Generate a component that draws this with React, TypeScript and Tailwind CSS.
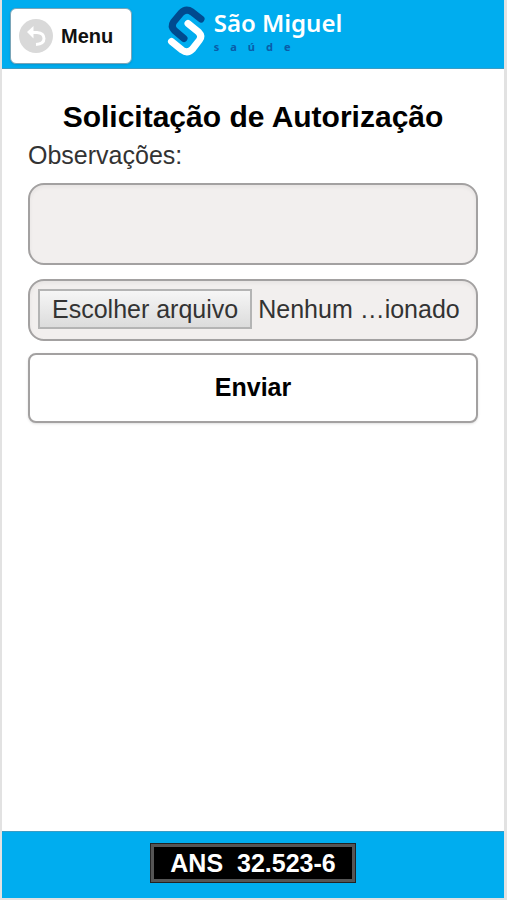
import React, { useState } from 'react';

const Logo: React.FC = () => (
  <div className="flex items-start gap-2 pl-1">
    <svg viewBox="0 0 38 48" className="w-[38px] h-12 overflow-visible" fill="none" strokeWidth="7" strokeLinecap="round" strokeLinejoin="round" aria-hidden="true">
      <path d="M33 13 L24 6 Q18 2 13 7 L5.5 16 Q2.5 20.5 6.5 24.5 L16 32.5" stroke="#004a8f" />
      <path d="M20 17.5 L30.5 26 Q34.5 30 31.5 34 L24.5 43 Q19.5 48 14 44 L3.5 35.5" stroke="#fff" />
    </svg>
    <div className="flex flex-col font-['Noto_Sans',sans-serif]">
      <span className="text-2xl leading-[34px] font-semibold text-white">São Miguel</span>
      <span className="text-[11px] leading-3.5 font-bold tracking-[11px] text-[#0a5ca8]">saúde</span>
    </div>
  </div>
);

const App: React.FC = () => {
  const [notes, setNotes] = useState('');
  const [fileName, setFileName] = useState('Nenhum …ionado');

  const handleFile = (e: React.ChangeEvent<HTMLInputElement>) => {
    const file = e.target.files?.[0];
    setFileName(file ? file.name : 'Nenhum …ionado');
  };

  return (
    <div className="min-h-screen flex flex-col bg-white border-l-2 border-r-3 border-b-2 border-[#e2e2e2] font-['Liberation_Sans',Arial,sans-serif] text-black">
      {/* Top bar */}
      <header className="grid grid-cols-[1fr_auto_1fr] items-start bg-[#00adef] border-b border-[#3a9cc4] px-2 pt-1.5 pb-1">
        <button
          type="button"
          className="justify-self-start flex items-center gap-2 h-14 mt-0.5 pl-2 pr-[18px] bg-white border border-[#7aa5b8] rounded-md shadow text-xl font-bold text-[#111]"
        >
          <svg viewBox="0 0 34 34" className="w-[34px] h-[34px]" fill="none" aria-hidden="true">
            <circle cx="17" cy="17" r="17" fill="#d9d9d9" />
            <path d="M13 13.5 H18 Q25 14 25 19.5 Q25 25 17 25.5" stroke="#fff" strokeWidth="3" />
            <path d="M8 13 L14.5 7 V19.5 Z" fill="#fff" />
          </svg>
          Menu
        </button>
        <Logo />
      </header>

      <main className="flex-1 px-[26px] pt-7">
        <form onSubmit={(e) => e.preventDefault()}>
          <h1 className="text-center text-[30px] leading-10 font-bold">Solicitação de Autorização</h1>
          <label htmlFor="notes" className="block text-[25px] leading-9 text-[#333]">
            Observações:
          </label>
          <textarea
            id="notes"
            value={notes}
            onChange={(e) => setNotes(e.target.value)}
            className="block w-full h-[82px] mt-2.5 px-3 py-2 resize-none text-[25px] bg-[#f2efee] border-2 border-[#a3a1a1] rounded-2xl shadow-inner"
          />

          {/* File picker */}
          <label
            htmlFor="file"
            className="flex items-start gap-1.5 h-[62px] mt-3.5 px-2 pt-2 bg-[#f2efee] border-2 border-[#a3a1a1] rounded-2xl shadow-inner text-[25px] leading-8 text-[#333] whitespace-nowrap overflow-hidden"
          >
            <input id="file" type="file" onChange={handleFile} className="sr-only" />
            <span className="px-3 py-0.5 bg-linear-to-b from-[#f6f6f6] to-[#dcdcdc] border-2 border-[#b4b4b4]">
              Escolher arquivo
            </span>
            <span className="py-1 truncate">{fileName}</span>
          </label>

          <button
            type="submit"
            className="w-full h-[70px] mt-3 bg-white border-2 border-[#a3a1a1] rounded-lg shadow-sm text-[25px] font-bold"
          >
            Enviar
          </button>
        </form>
      </main>

      <footer className="flex justify-center bg-[#00adef] border-t border-[#3a9cc4] pt-3 pb-4">
        <p className="px-4 bg-black border-3 border-[#555] outline outline-[#222] text-[25px] leading-8 font-bold text-white whitespace-pre">
          ANS  32.523-6
        </p>
      </footer>
    </div>
  );
};

export default App;
